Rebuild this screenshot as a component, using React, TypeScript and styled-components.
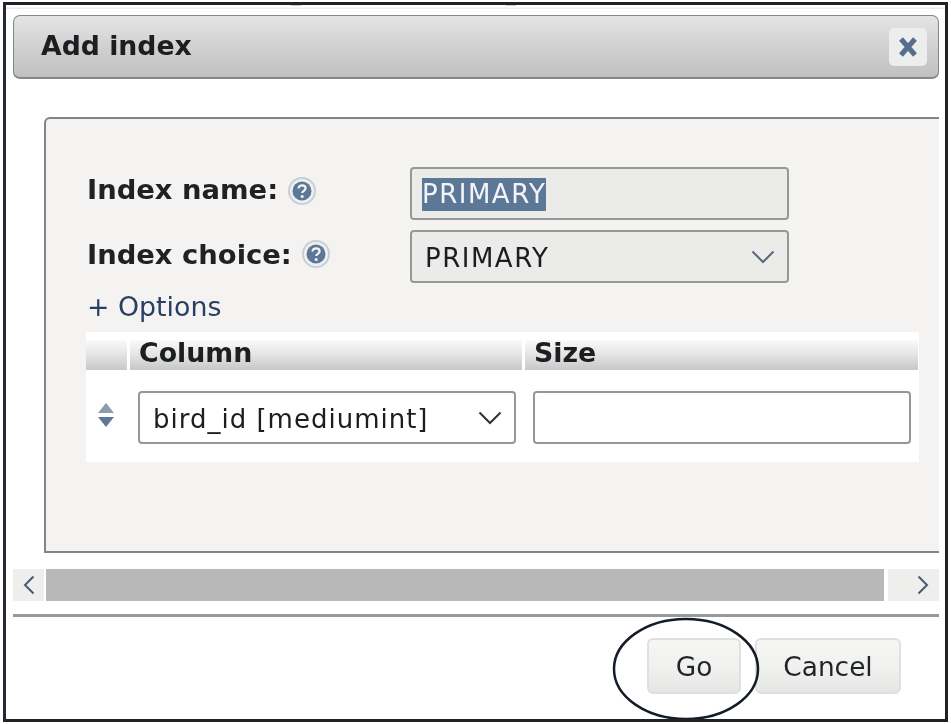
import React from 'react';
import styled, { createGlobalStyle } from 'styled-components';

const GlobalStyle = createGlobalStyle`
  html, body {
    margin: 0;
    padding: 0;
    background: #ffffff;
  }
  body {
    font-family: "DejaVu Sans", Verdana, sans-serif;
  }
`;

// the reference is a soft, resampled screenshot, hence the slight blur
const Frame = styled.div`
  position: relative;
  box-sizing: border-box;
  width: 945px;
  height: 720px;
  margin: 2px 0 0 3px;
  padding: 0 6px 0 7px;
  border: 3px solid #1f2123;
  border-left-color: #242a31;
  background: #ffffff;
  overflow: hidden;
  filter: blur(0.4px);
`;

const TopStrip = styled.div`
  display: flex;
  gap: 205px;
  box-sizing: border-box;
  height: 4px;
  margin: 0 -7px 6px;
  padding-left: 285px;
  background: linear-gradient(180deg, #ffffff 0%, #ffffff 40%, #e4e6e6 100%);
`;

const Speck = styled.span`
  width: 10px;
  height: 1px;
  background: #c3ccd8;
`;

const TitleBar = styled.div`
  box-sizing: border-box;
  height: 64px;
  display: flex;
  align-items: center;
  justify-content: space-between;
  padding: 0 11px 0 27px;
  border: 1px solid #858786;
  border-bottom-width: 2px;
  border-radius: 7px;
  background: linear-gradient(180deg, #e3e4e3 0%, #d2d3d2 45%, #c9cac9 70%, #bfc0bf 100%);
`;

const Title = styled.h1`
  margin: 0 0 2px;
  font-size: 26.7px;
  font-weight: 700;
  color: #1c1e21;
`;

const CloseButton = styled.button`
  width: 38px;
  height: 38px;
  padding: 0;
  display: flex;
  align-items: center;
  justify-content: center;
  border: none;
  border-radius: 5px;
  background: #eceded;
`;

const Panel = styled.div`
  box-sizing: border-box;
  height: 436px;
  margin-top: 38px;
  margin-left: 31px;
  padding: 48px 19px 0 41px;
  border: 2px solid #828485;
  border-right: none;
  border-radius: 6px 0 0 0;
  background: #f4f3f2;
`;

const FormRow = styled.div`
  display: flex;
  justify-content: space-between;
  align-items: flex-start;
  width: 702px;
  height: 63px;
`;

const Label = styled.label<{ $drop?: number }>`
  display: flex;
  align-items: center;
  gap: 9px;
  height: 44px;
  margin-top: ${(p) => p.$drop ?? 0}px;
  font-size: 27.4px;
  font-weight: 700;
  color: #1f2123;
`;

const HelpMark = styled.svg<{ $drop?: number }>`
  margin-top: ${(p) => p.$drop ?? 0}px;
`;

const Field = styled.div<{ $light?: boolean }>`
  box-sizing: border-box;
  display: flex;
  align-items: center;
  justify-content: space-between;
  width: ${(p) => (p.$light ? '378px' : '379px')};
  height: 53px;
  padding: 0 12px 0 10px;
  border: 2px solid #969898;
  border-radius: 4px;
  background: ${(p) => (p.$light ? '#ffffff' : '#ebebea')};
  font-size: 26px;
  color: #1b1d21;
`;

const Selected = styled.span`
  margin-top: 2px;
  padding: 1px 0 2px;
  background: #5d7797;
  color: #f2f4f7;
  letter-spacing: 1.5px;
`;

const SelectText = styled.span<{ $spacing: number }>`
  margin-top: 3px;
  padding-left: 3px;
  letter-spacing: ${(p) => p.$spacing}px;
`;

const OptionsLink = styled.div`
  margin-top: -1px;
  font-size: 26.8px;
  line-height: 30px;
  color: #2a4062;
`;

const Table = styled.div`
  width: 833px;
  height: 130px;
  margin: 10px 0 0 -1px;
  background: #ffffff;
`;

const HeaderRow = styled.div`
  display: grid;
  grid-template-columns: 41px 392px 393px;
  column-gap: 3px;
  padding-top: 8px;
`;

const HeaderCell = styled.div`
  box-sizing: border-box;
  height: 30px;
  padding-left: 9px;
  font-size: 26.8px;
  line-height: 26px;
  font-weight: 700;
  color: #1c1e21;
  background: linear-gradient(180deg, #fafafa 0%, #e6e6e6 45%, #c6c8c7 100%);
`;

const BodyRow = styled.div`
  display: grid;
  grid-template-columns: 35px 378px 377px;
  column-gap: 17px;
  align-items: center;
  padding-top: 21px;
`;

const SortHandle = styled.div`
  display: flex;
  justify-content: center;
  padding-left: 4px;
  padding-bottom: 6px;
`;

const ScrollBar = styled.div`
  display: grid;
  grid-template-columns: 31px 1fr 51px;
  column-gap: 2px;
  height: 32px;
  margin-top: 16px;
`;

const ScrollArrow = styled.div<{ $shift?: number }>`
  display: flex;
  align-items: center;
  justify-content: center;
  padding-left: ${(p) => p.$shift ?? 0}px;
  background: #eeeeed;
`;

const ScrollThumb = styled.div`
  margin-right: 2px;
  background: #b7b8b7;
`;

const Divider = styled.hr`
  height: 3px;
  margin: 13px 0 0;
  border: none;
  background: #999b9a;
`;

const Footer = styled.div`
  display: flex;
  justify-content: flex-end;
  gap: 14px;
  padding: 21px 38px 0 0;
`;

const ActionButton = styled.button<{ $width: number }>`
  box-sizing: border-box;
  width: ${(p) => p.$width}px;
  height: 56px;
  padding: 0;
  border: 2px solid #e0e0df;
  border-radius: 6px;
  background: linear-gradient(180deg, #f6f6f5 0%, #f0f0ef 55%, #e6e6e5 100%);
  font-family: "DejaVu Sans", Verdana, sans-serif;
  font-size: 26.4px;
  color: #1f242a;
`;

const Circle = styled.svg`
  position: absolute;
  left: 605px;
  top: 611px;
  pointer-events: none;
`;

const HelpIcon = ({ drop }: { drop?: number }) => (
  <HelpMark $drop={drop} width="30" height="30" viewBox="0 0 30 30">
    <circle cx="15" cy="15" r="14" fill="#c9cfd6" />
    <circle cx="15" cy="15" r="12" fill="#eef0f2" />
    <circle cx="15" cy="15" r="9.5" fill="#5d7797" />
    <path d="M11.5 12.5c0-2 1.6-3.2 3.6-3.2s3.5 1.1 3.5 3c0 2.6-3.4 2.5-3.4 4.8" fill="none" stroke="#f2f4f6" strokeWidth="2.2" />
    <circle cx="15.2" cy="20.5" r="1.5" fill="#f2f4f6" />
  </HelpMark>
);

const Chevron = ({ dark }: { dark?: boolean }) => (
  <svg width="24" height="14" viewBox="0 0 24 14">
    <path d="M1.5 1.5 12 12 22.5 1.5" fill="none" stroke={dark ? '#2f3338' : '#59687c'} strokeWidth="2" />
  </svg>
);

const App = () => (
  <>
    <GlobalStyle />
    <Frame>
      <TopStrip>
        <Speck />
        <Speck />
      </TopStrip>
      <TitleBar>
        <Title>Add index</Title>
        <CloseButton aria-label="Close">
          <svg width="20" height="22" viewBox="0 0 20 22">
            <path d="M3 3 17 19M17 3 3 19" stroke="#566d8c" strokeWidth="5" />
          </svg>
        </CloseButton>
      </TitleBar>
      <Panel>
        <FormRow>
          <Label>
            Index name: <HelpIcon drop={4} />
          </Label>
          <Field>
            <Selected>PRIMARY</Selected>
          </Field>
        </FormRow>
        <FormRow>
          <Label $drop={2}>
            Index choice: <HelpIcon />
          </Label>
          <Field>
            <SelectText $spacing={1.5}>PRIMARY</SelectText>
            <Chevron />
          </Field>
        </FormRow>
        <OptionsLink>+ Options</OptionsLink>
        <Table>
          <HeaderRow>
            <HeaderCell />
            <HeaderCell>Column</HeaderCell>
            <HeaderCell>Size</HeaderCell>
          </HeaderRow>
          <BodyRow>
            <SortHandle>
              <svg width="18" height="26" viewBox="0 0 18 26">
                <path d="M9 1 17 11H1Z" fill="#8b9bb0" />
                <path d="M1 15H17L9 25Z" fill="#5d7797" />
              </svg>
            </SortHandle>
            <Field $light>
              <SelectText $spacing={1}>bird_id [mediumint]</SelectText>
              <Chevron dark />
            </Field>
            <Field $light />
          </BodyRow>
        </Table>
      </Panel>
      <ScrollBar>
        <ScrollArrow>
          <svg width="12" height="20" viewBox="0 0 12 20">
            <path d="M10.5 1.5 2 10l8.5 8.5" fill="none" stroke="#4a5a73" strokeWidth="2" />
          </svg>
        </ScrollArrow>
        <ScrollThumb />
        <ScrollArrow $shift={18}>
          <svg width="12" height="20" viewBox="0 0 12 20">
            <path d="M1.5 1.5 10 10l-8.5 8.5" fill="none" stroke="#4a5a73" strokeWidth="2" />
          </svg>
        </ScrollArrow>
      </ScrollBar>
      <Divider />
      <Footer>
        <ActionButton $width={94}>Go</ActionButton>
        <ActionButton $width={146}>Cancel</ActionButton>
      </Footer>
      <Circle width="150" height="106" viewBox="0 0 150 106">
        <ellipse cx="75" cy="53" rx="72" ry="50" fill="none" stroke="#141c28" strokeWidth="2.5" />
      </Circle>
    </Frame>
  </>
);

export default App;
